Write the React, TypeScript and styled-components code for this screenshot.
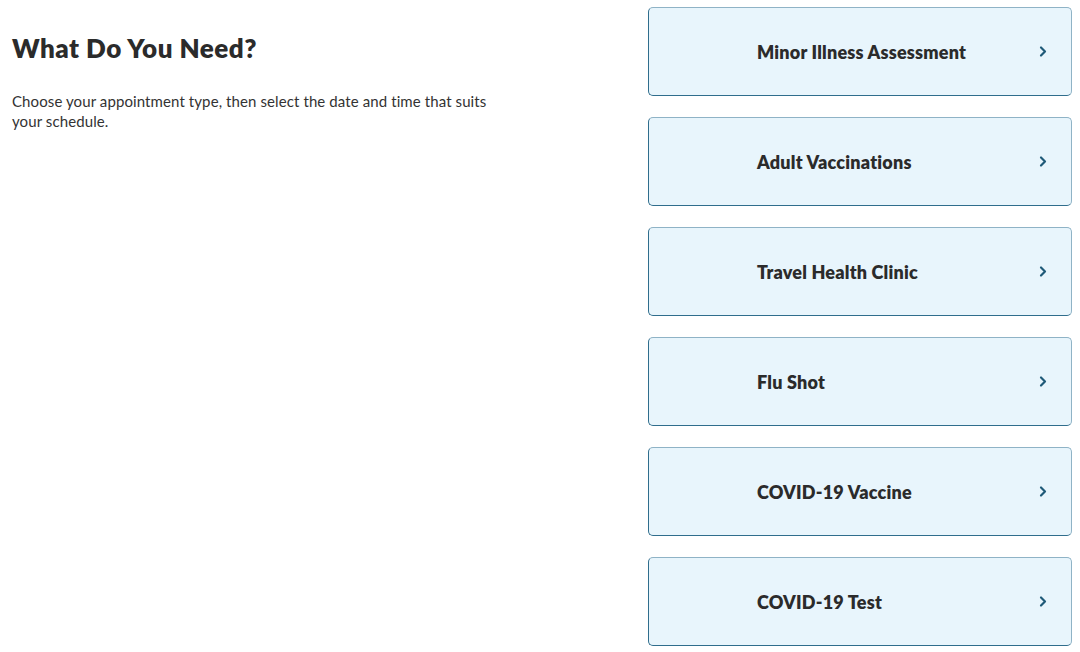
import styled, { createGlobalStyle } from "styled-components";

const GlobalStyle = createGlobalStyle`
    body {
        margin: 0;
        background: #ffffff;
        font-family: "Lato", "Noto Sans", sans-serif;
        color: #2b2b2b;
    }
`;

const Page = styled.div`
    display: flex;
    flex-direction: row;
    justify-content: space-between;
    width: 1080px;
    height: 652px;
    padding: 7px 8px 0 12px;
    box-sizing: border-box;
`;

const Intro = styled.div`
    display: flex;
    flex-direction: column;
    width: 490px;
    padding-top: 26px;
`;

const Title = styled.h1`
    margin: 0;
    font-size: 26px;
    font-weight: 800;
    line-height: 30px;
    letter-spacing: 0.5px;
    color: #2b2b2b;
`;

const Lead = styled.p`
    margin: 28px 0 0;
    font-size: 15px;
    line-height: 20px;
    letter-spacing: 0.1px;
    color: #333333;
`;

const Options = styled.div`
    display: flex;
    flex-direction: column;
    gap: 21px;
    width: 424px;
`;

const Option = styled.button`
    display: flex;
    align-items: center;
    justify-content: space-between;
    height: 89px;
    padding: 0 22px 0 108px;
    box-sizing: border-box;
    background: #e8f5fc;
    border: 1px solid #8fb3c6;
    border-left-color: #2f6d8c;
    border-bottom-color: #2f6d8c;
    border-radius: 5px;
    font-family: "Lato", "Noto Sans", sans-serif;
    font-size: 18px;
    font-weight: 800;
    letter-spacing: 0.2px;
    color: #2b2b2b;
    text-align: left;
    cursor: pointer;
`;

const Chevron = () => (
    <svg width="12" height="13" viewBox="0 0 12 13">
        <path d="M4 2.5l4 4-4 4" fill="none" stroke="#1f5a78" strokeWidth="2.2" strokeLinecap="round" strokeLinejoin="round" />
    </svg>
);

const appointmentTypes = [
    "Minor Illness Assessment",
    "Adult Vaccinations",
    "Travel Health Clinic",
    "Flu Shot",
    "COVID-19 Vaccine",
    "COVID-19 Test",
];

const App = () =>
{
    return (
        <>
            <GlobalStyle />
            <Page>
                <Intro>
                    <Title>What Do You Need?</Title>
                    <Lead>Choose your appointment type, then select the date and time that suits your schedule.</Lead>
                </Intro>
                <Options>
                    {appointmentTypes.map( type =>
                        <Option key={type}>
                            <span>{type}</span>
                            <Chevron />
                        </Option>
                    )}
                </Options>
            </Page>
        </>
    );
}

export default App;
